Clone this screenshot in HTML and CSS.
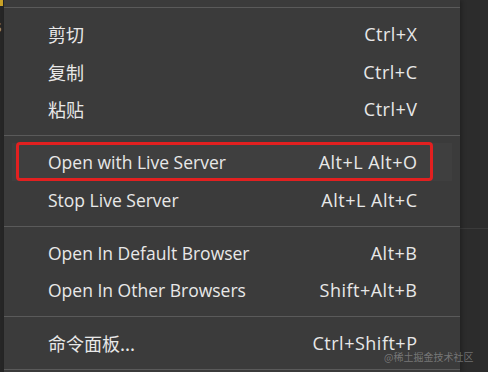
FILE: index.html
```html
<!DOCTYPE html>
<html lang="zh">
<head>
<meta charset="utf-8">
<link rel="stylesheet" href="styles.css">
</head>
<body>
<div class="screen">
  <div class="sidebar">
    <div class="tab-mark"></div>
    <span class="side-letter">s</span>
  </div>
  <div class="menu">
    <div class="prev"></div>
    <div class="sep"></div>
    <div class="group">
      <div class="row"><span class="label cjk">剪切</span><span class="key">Ctrl+X</span></div>
      <div class="row"><span class="label cjk">复制</span><span class="key">Ctrl+C</span></div>
      <div class="row"><span class="label cjk">粘贴</span><span class="key">Ctrl+V</span></div>
    </div>
    <div class="sep"></div>
    <div class="group">
      <div class="row hover"><span class="label">Open with Live Server</span><span class="key">Alt+L Alt+O</span><span class="mark"></span></div>
      <div class="row"><span class="label">Stop Live Server</span><span class="key">Alt+L Alt+C</span></div>
    </div>
    <div class="sep"></div>
    <div class="group">
      <div class="row"><span class="label">Open In Default Browser</span><span class="key">Alt+B</span></div>
      <div class="row"><span class="label">Open In Other Browsers</span><span class="key">Shift+Alt+B</span></div>
    </div>
    <div class="sep"></div>
    <div class="group">
      <div class="row"><span class="label cjk">命令面板...</span><span class="key">Ctrl+Shift+P</span></div>
    </div>
    <div class="sep"></div>
  </div>
  <div class="gutter">
    <div class="gutter-line"></div>
  </div>
</div>
<div class="watermark">@稀土掘金技术社区</div>
</body>
</html>
```
FILE: styles.css
```css
html, body {
  margin: 0;
  padding: 0;
}
body {
  width: 488px;
  height: 372px;
  overflow: hidden;
  background: #2c2c2c;
  font-family: "Open Sans", "Noto Sans CJK SC", sans-serif;
  position: relative;
}
.screen {
  display: flex;
  height: 372px;
}
.sidebar {
  width: 4px;
  background: #262626;
  overflow: hidden;
  display: flex;
  flex-direction: column;
}
.tab-mark {
  width: 3px;
  height: 6px;
  background: #c9a227;
}
.side-letter {
  margin-top: 12px;
  margin-left: -6px;
  color: #9a9a9a;
  font-size: 16px;
  line-height: 16px;
}
.menu {
  width: 456px;
  background: #3b3b3b;
  box-shadow: 2px 0 4px rgba(0, 0, 0, 0.25);
  position: relative;
  z-index: 1;
}
.prev {
  height: 7px;
}
.sep {
  height: 1px;
  background: #5a5a5a;
}
.group {
  padding: 7.25px 0;
}
.row {
  position: relative;
  height: 37.5px;
  margin: 0 8px;
  padding: 0 35px 0 36px;
  display: flex;
  align-items: center;
  justify-content: space-between;
  color: #e8e8e8;
  font-size: 17.5px;
  white-space: nowrap;
}
.label.cjk {
  font-family: "Noto Sans CJK SC", sans-serif;
  font-size: 18px;
}
.key {
  font-size: 18px;
  letter-spacing: 0.5px;
  margin-right: -0.5px;
}
.row.hover {
  background: #3f3f3f;
}
.mark {
  position: absolute;
  left: 4px;
  right: 19px;
  top: -1px;
  bottom: 0;
  border: 3px solid #e22020;
  border-radius: 4px;
}
.gutter {
  flex: 1;
  background: #2c2c2c;
  padding-top: 228px;
}
.gutter-line {
  height: 1px;
  background: #3a3a3a;
}
.watermark {
  position: absolute;
  left: 384px;
  top: 349px;
  z-index: 2;
  font-family: "Noto Sans CJK SC", sans-serif;
  font-size: 10px;
  color: rgba(170, 170, 170, 0.55);
  white-space: nowrap;
}
```
